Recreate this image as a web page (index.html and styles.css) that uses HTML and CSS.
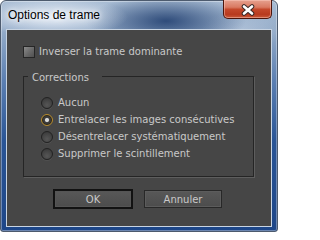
FILE: index.html
```html
<!DOCTYPE html>
<html lang="fr">
<head>
<meta charset="utf-8">
<title>Options de trame</title>
<link rel="stylesheet" href="styles.css">
</head>
<body>
<div class="window">
  <div class="titlebar">
    <span class="title">Options de trame</span>
    <button class="close" aria-label="Fermer">
      <svg width="14" height="12" viewBox="0 0 14 12">
        <path d="M3 2.5 L11 9.5 M11 2.5 L3 9.5" stroke="#3a2a28" stroke-width="4.6" stroke-linecap="round"/>
        <path d="M3 2.5 L11 9.5 M11 2.5 L3 9.5" stroke="#ffffff" stroke-width="2.6" stroke-linecap="round"/>
      </svg>
    </button>
  </div>
  <div class="client">
    <label class="check"><span class="box"></span><span>Inverser la trame dominante</span></label>
    <fieldset class="group">
      <legend>Corrections</legend>
      <div class="options">
        <div class="radio"><span class="dot"></span><span>Aucun</span></div>
        <div class="radio on"><span class="dot"></span><span>Entrelacer les images consécutives</span></div>
        <div class="radio"><span class="dot"></span><span>Désentrelacer systématiquement</span></div>
        <div class="radio"><span class="dot"></span><span>Supprimer le scintillement</span></div>
      </div>
    </fieldset>
    <div class="buttons">
      <button class="btn default">OK</button>
      <button class="btn">Annuler</button>
    </div>
  </div>
</div>
</body>
</html>
```

FILE: styles.css
```css
body {
  margin: 0;
  background: #ffffff;
}

.window {
  width: 278px;
  height: 232px;
  box-sizing: border-box;
  border: 1px solid #4d5b6e;
  border-radius: 6px 6px 3px 3px;
  display: flex;
  flex-direction: column;
  background:
    radial-gradient(ellipse 75px 20px at 52px 16px, rgba(236, 242, 250, 0.95), rgba(236, 242, 250, 0) 100%),
    radial-gradient(ellipse 80px 26px at 165px 20px, rgba(28, 58, 108, 0.85), rgba(28, 58, 108, 0) 100%),
    radial-gradient(ellipse 40px 20px at 240px 30px, rgba(190, 205, 225, 0.6), rgba(190, 205, 225, 0) 100%),
    linear-gradient(to bottom, #a9bdd4 0px, #93abc8 30px, #5b7fb2 80px, #2a5596 140px, #1d4688 100%);
  box-shadow: inset 0 0 0 1px rgba(255, 255, 255, 0.35);
}

.titlebar {
  flex: none;
  height: 28px;
  display: flex;
  align-items: flex-start;
}

.title {
  font: 12px/14px "Liberation Sans", Arial, sans-serif;
  color: #000000;
  padding: 7px 0 0 7px;
  text-shadow: 0 0 5px #ffffff, 0 0 9px rgba(255, 255, 255, 0.9);
}

.close {
  margin: -1px 5px 0 auto;
  width: 49px;
  height: 19px;
  padding: 0;
  box-sizing: border-box;
  border: 1px solid #4c150c;
  border-top: none;
  border-radius: 0 0 5px 5px;
  background: linear-gradient(to bottom, #e6a18f 0%, #d97a62 40%, #c4482b 52%, #b83a1f 80%, #c9593a 100%);
  box-shadow: inset 0 0 0 1px rgba(255, 210, 200, 0.45);
  display: flex;
  align-items: center;
  justify-content: center;
}

.close svg {
  display: block;
  margin-top: 1px;
}

.client {
  flex: 1;
  margin: 0 5px 4px 5px;
  border: 1px solid #c8d4e2;
  background: #464646;
  padding: 16px 0 0 16px;
  font: 10px "DejaVu Sans", Verdana, sans-serif;
  color: #c9c9c9;
}

.check {
  display: flex;
  align-items: center;
  gap: 4px;
  height: 12px;
  line-height: 12px;
}

.box {
  width: 12px;
  height: 12px;
  box-sizing: border-box;
  border: 1px solid #262626;
  background: linear-gradient(135deg, #8c8c8c 0%, #6a6a6a 50%, #505050 100%);
}

.group {
  margin: 11px 0 0 0;
  padding: 0;
  width: 231px;
  box-sizing: border-box;
  border: 1px solid #252525;
  box-shadow: 1px 1px 0 #5e5e5e;
  min-width: 0;
}

.group legend {
  margin-left: 4px;
  padding: 3px 13px 0 4px;
  line-height: 12px;
}

.options {
  padding: 10px 0 14px 17px;
}

.radio {
  display: flex;
  align-items: center;
  gap: 5px;
  height: 17px;
  line-height: 17px;
}

.dot {
  width: 12px;
  height: 12px;
  box-sizing: border-box;
  border-radius: 50%;
  border: 1px solid #222222;
  background: radial-gradient(circle at 50% 70%, #565656 0%, #444444 55%, #343434 100%);
  box-shadow: 0 1px 0 rgba(255, 255, 255, 0.06);
}

.radio.on .dot {
  border-color: #b58a2c;
  background: radial-gradient(circle, #e2e2e2 0, #d0d0d0 1.6px, #3a3a3a 2.6px, #3a3a3a 3.2px, #4a4a4a 100%);
  box-shadow: inset 0 0 0 1px #2a2418;
}

.buttons {
  display: flex;
  align-items: center;
  gap: 11px;
  margin: 12px 0 0 30px;
}

.btn {
  width: 78px;
  height: 18px;
  padding: 0;
  box-sizing: border-box;
  border: 1px solid #282828;
  background: linear-gradient(to bottom, #585858, #4c4c4c);
  box-shadow: inset 0 0 0 1px #5c5c5c;
  font: 10px "DejaVu Sans", Verdana, sans-serif;
  color: #c9c9c9;
}

.btn.default {
  width: 80px;
  height: 20px;
  border: 2px solid #121212;
  box-shadow: inset 0 0 0 1px #555555;
}
```
